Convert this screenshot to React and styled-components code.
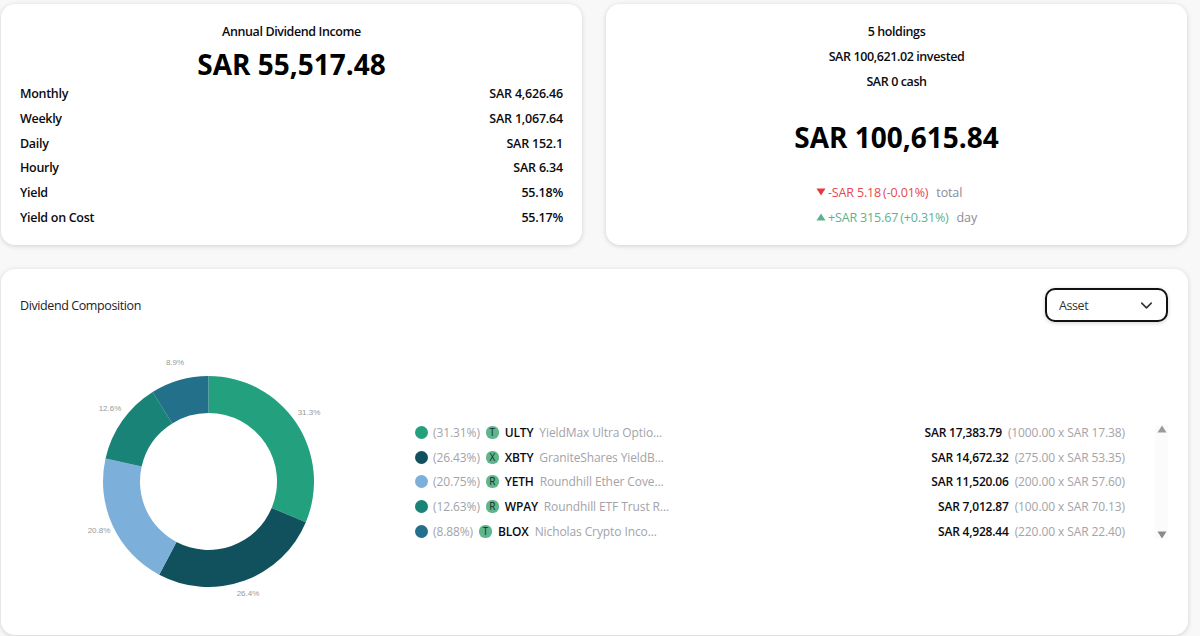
import styled, { createGlobalStyle } from 'styled-components';
import { ChevronDown } from 'lucide-react';

const holdings = [
  { pct: 31.31, label: '31.3%', color: '#23a17f', logo: 'T', ticker: 'ULTY', name: 'YieldMax Ultra Optio...', value: 'SAR 17,383.79', detail: '(1000.00 x SAR 17.38)', lx: 308, ly: 415 },
  { pct: 26.43, label: '26.4%', color: '#11505d', logo: 'X', ticker: 'XBTY', name: 'GraniteShares YieldB...', value: 'SAR 14,672.32', detail: '(275.00 x SAR 53.35)', lx: 247, ly: 596 },
  { pct: 20.75, label: '20.8%', color: '#7cafda', logo: 'R', ticker: 'YETH', name: 'Roundhill Ether Cove...', value: 'SAR 11,520.06', detail: '(200.00 x SAR 57.60)', lx: 98, ly: 533 },
  { pct: 12.63, label: '12.6%', color: '#1a8377', logo: 'R', ticker: 'WPAY', name: 'Roundhill ETF Trust R...', value: 'SAR 7,012.87', detail: '(100.00 x SAR 70.13)', lx: 109, ly: 411 },
  { pct: 8.88, label: '8.9%', color: '#22708a', logo: 'T', ticker: 'BLOX', name: 'Nicholas Crypto Inco...', value: 'SAR 4,928.44', detail: '(220.00 x SAR 22.40)', lx: 174, ly: 365 },
];

const incomeRows = [
  ['Monthly', 'SAR 4,626.46'],
  ['Weekly', 'SAR 1,067.64'],
  ['Daily', 'SAR 152.1'],
  ['Hourly', 'SAR 6.34'],
  ['Yield', '55.18%'],
  ['Yield on Cost', '55.17%'],
];

const CX = 139.5;
const CY = 136.5;
const R = 105.5;
const r = 68.5;

const arcPath = (start, end) => {
  const a0 = (start / 100) * Math.PI * 2;
  const a1 = (end / 100) * Math.PI * 2;
  const pt = (rad, a) => `${CX + rad * Math.sin(a)} ${CY - rad * Math.cos(a)}`;
  const large = end - start > 50 ? 1 : 0;
  return `M${pt(R, a0)} A${R} ${R} 0 ${large} 1 ${pt(R, a1)} L${pt(r, a1)} A${r} ${r} 0 ${large} 0 ${pt(r, a0)} Z`;
};

const Donut = () => {
  let run = 0;
  return (
    <ChartSvg viewBox="0 0 280 260">
      {holdings.map((h) => {
        const start = run;
        run += h.pct;
        return <path key={h.ticker} d={arcPath(start, run)} fill={h.color} />;
      })}
      {holdings.map((h) => (
        <ChartLabel key={h.label} x={h.lx - 68} y={h.ly - 345} textAnchor="middle">
          {h.label}
        </ChartLabel>
      ))}
    </ChartSvg>
  );
};

const Triangle = ({ up, color }) => (
  <svg width="10" height="8" viewBox="0 0 10 8">
    <path d={up ? 'M5 0.5 L9.5 7.5 L0.5 7.5 Z' : 'M5 7.5 L9.5 0.5 L0.5 0.5 Z'} fill={color} />
  </svg>
);

const App = () => {
  return (
    <Page>
      <GlobalStyle />
      <TopRow>
        <Card>
          <CardLine>Annual Dividend Income</CardLine>
          <BigValue>SAR 55,517.48</BigValue>
          <IncomeList>
            {incomeRows.map(([label, value]) => (
              <IncomeRow key={label}>
                <IncomeLabel>{label}</IncomeLabel>
                <span>{value}</span>
              </IncomeRow>
            ))}
          </IncomeList>
        </Card>
        <Card>
          <CardLine>5 holdings</CardLine>
          <CardLine>SAR 100,621.02 invested</CardLine>
          <CardLine>SAR 0 cash</CardLine>
          <TotalValue>SAR 100,615.84</TotalValue>
          <ChangeBlock>
            <ChangeRow color="#e5484d">
              <Triangle color="#e5383f" />
              <span>-SAR 5.18</span>
              <span>(-0.01%)</span>
              <ChangeNote>total</ChangeNote>
            </ChangeRow>
            <ChangeRow color="#5cb28c">
              <Triangle up color="#5cb28c" />
              <span>+SAR 315.67</span>
              <span>(+0.31%)</span>
              <ChangeNote>day</ChangeNote>
            </ChangeRow>
          </ChangeBlock>
        </Card>
      </TopRow>

      <CompositionCard>
        <CompositionHeader>
          <CompositionTitle>Dividend Composition</CompositionTitle>
          <SelectBox>
            Asset
            <ChevronDown size={19} strokeWidth={2} />
          </SelectBox>
        </CompositionHeader>
        <CompositionBody>
          <ChartWrap>
            <Donut />
          </ChartWrap>
          <HoldingList>
            {holdings.map((h) => (
              <HoldingRow key={h.ticker}>
                <HoldingLeft>
                  <Dot color={h.color} />
                  <Muted>({h.pct}%)</Muted>
                  <LogoBadge>{h.logo}</LogoBadge>
                  <Ticker>{h.ticker}</Ticker>
                  <Muted>{h.name}</Muted>
                </HoldingLeft>
                <HoldingRight>
                  <Ticker>{h.value}</Ticker>
                  <Muted>{h.detail}</Muted>
                </HoldingRight>
              </HoldingRow>
            ))}
          </HoldingList>
          <ScrollTrack>
            <Triangle up color="#9a9a9a" />
            <Triangle color="#8a8a8a" />
          </ScrollTrack>
        </CompositionBody>
      </CompositionCard>
    </Page>
  );
};

const GlobalStyle = createGlobalStyle`
  html, body {
    margin: 0;
    padding: 0;
    background: #f8f8f8;
    height: 636px;
    overflow: hidden;
  }
  body {
    font-family: "Open Sans", "Noto Sans", sans-serif;
    color: #0b0b0f;
  }
`;

const Page = styled.div`
  width: 1187px;
  margin-left: 1px;
  padding-top: 4px;
  display: flex;
  flex-direction: column;
  gap: 24px;
`;

const TopRow = styled.div`
  display: grid;
  grid-template-columns: 581px 581px;
  gap: 24px;
`;

const Card = styled.div`
  height: 241px;
  box-sizing: border-box;
  padding: 16px 19px 0;
  background: #fff;
  border-radius: 14px;
  box-shadow: 0 1px 5px rgba(0, 0, 0, 0.16);
  font-size: 12.5px;
  text-align: center;
`;

const CardLine = styled.div`
  height: 24.75px;
  line-height: 24.75px;
  font-weight: 600;
  letter-spacing: -0.4px;
`;

const BigValue = styled.div`
  font-size: 28px;
  font-weight: 700;
  line-height: 39px;
  height: 36.75px;
  color: #000;
`;

const TotalValue = styled(BigValue)`
  margin: 23.5px 0 25.5px;
`;

const IncomeList = styled.div`
  padding-top: 0.5px;
  font-weight: 600;
  letter-spacing: -0.2px;
`;

const IncomeRow = styled.div`
  display: flex;
  justify-content: space-between;
  height: 24.75px;
  line-height: 24.75px;
`;

const IncomeLabel = styled.span`
  letter-spacing: -0.3px;
`;

const ChangeBlock = styled.div`
  display: flex;
  flex-direction: column;
  align-items: flex-start;
  width: fit-content;
  margin: 0 auto;
  letter-spacing: -0.15px;
`;

const ChangeRow = styled.div`
  display: flex;
  align-items: center;
  gap: 2px;
  height: 24.75px;
  color: ${(props) => props.color};
`;

const ChangeNote = styled.span`
  color: #8c8c94;
  margin-left: 6px;
`;

const CompositionCard = styled.div`
  height: 366px;
  background: #fff;
  border-radius: 14px;
  box-shadow: 0 1px 5px rgba(0, 0, 0, 0.16);
  box-sizing: border-box;
  padding: 19px 20px 0 19px;
`;

const CompositionHeader = styled.div`
  display: flex;
  justify-content: space-between;
  align-items: center;
  height: 34px;
  margin-bottom: 23px;
`;

const CompositionTitle = styled.div`
  font-size: 12.5px;
  letter-spacing: -0.4px;
  color: #222;
`;

const SelectBox = styled.div`
  width: 123px;
  height: 34px;
  box-sizing: border-box;
  display: flex;
  justify-content: space-between;
  align-items: center;
  padding: 0 10px 0 12px;
  border: 2px solid #111;
  border-radius: 10px;
  box-shadow: 0 1px 4px rgba(0, 0, 0, 0.18);
  background: #fff;
  font-size: 12.5px;
  letter-spacing: -0.4px;
  color: #333;
`;

const CompositionBody = styled.div`
  display: flex;
  align-items: flex-start;
`;

const ChartWrap = styled.div`
  width: 395px;
  flex: none;
`;

const ChartSvg = styled.svg`
  display: block;
  width: 280px;
  height: 260px;
  margin-left: 49px;
`;

const ChartLabel = styled.text`
  font-family: "Liberation Sans", sans-serif;
  font-size: 8px;
  fill: #999;
`;

const HoldingList = styled.div`
  width: 710px;
  flex: none;
  margin-top: 75px;
  font-size: 12px;
  letter-spacing: -0.1px;
`;

const HoldingRow = styled.div`
  display: flex;
  justify-content: space-between;
  align-items: center;
  height: 24.75px;
`;

const HoldingLeft = styled.div`
  display: flex;
  align-items: center;
  gap: 6px;
`;

const HoldingRight = styled.div`
  display: flex;
  align-items: center;
  gap: 6px;
`;

const Dot = styled.span`
  width: 13px;
  height: 13px;
  border-radius: 50%;
  margin-right: -1px;
  background: ${(props) => props.color};
`;

const LogoBadge = styled.span`
  width: 13px;
  height: 13px;
  border-radius: 6px;
  background: #5fb58c;
  color: #12302a;
  font-size: 10px;
  line-height: 13px;
  text-align: center;
`;

const Ticker = styled.span`
  font-weight: 600;
  letter-spacing: -0.2px;
  color: #0b0b0f;
`;

const Muted = styled.span`
  color: #a3a3a8;
`;

const ScrollTrack = styled.div`
  width: 14px;
  height: 114px;
  margin: 80px 0 0 30px;
  display: flex;
  flex-direction: column;
  justify-content: space-between;
  align-items: center;
  background: #fbfbfb;
`;

export default App;
